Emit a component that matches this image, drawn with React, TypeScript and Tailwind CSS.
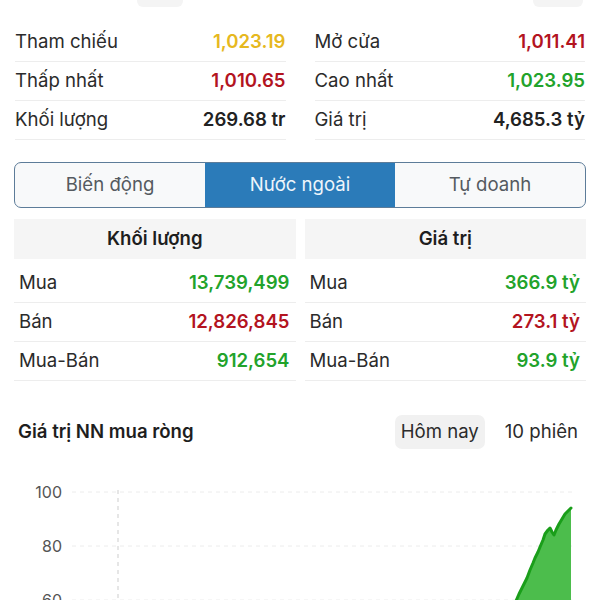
import React from "react";

const font = { fontFamily: "Inter, 'Liberation Sans', sans-serif" };

function StatRow({ label, value, color }: { label: string; value: string; color: string }) {
  return (
    <div className="flex h-[39px] items-center justify-between border-b border-[#ededed]">
      <span className="text-[18.6px] text-[#2b2b2b]">{label}</span>
      <span className={`text-[18.6px] font-semibold ${color}`}>{value}</span>
    </div>
  );
}

function TRow({ label, value, color }: { label: string; value: string; color: string }) {
  return (
    <div className="flex h-[39px] items-center justify-between border-b border-[#ededed] pl-[5px] pr-[6px]">
      <span className="text-[18.6px] text-[#2b2b2b]">{label}</span>
      <span className={`text-[18.6px] font-semibold ${color}`}>{value}</span>
    </div>
  );
}

export default function App() {
  const green = "text-[#22a32b]";
  const red = "text-[#b3141f]";
  const yellow = "text-[#e6b820]";
  const dark = "text-[#222222]";

  const yOf = (v: number) => 22 - (v - 100) * 2.7;
  const pts: [number, number][] = [
    [516, 131], [519, 124], [522, 118], [524, 114], [527, 108], [530, 100], [533, 93], [535, 88],
    [538, 82], [540, 77], [543, 70], [545, 64], [548, 60], [550, 58], [552, 62], [554, 65],
    [556, 60], [559, 54], [562, 49], [565, 44], [568, 41], [571, 38],
  ];
  const line = pts.map((p, i) => `${i ? "L" : "M"}${p[0]} ${p[1]}`).join(" ");
  const area = `${line} L571 131 L516 131 Z`;

  return (
    <div className="h-[600px] w-[600px] overflow-hidden bg-white" style={font}>
      <div className="relative h-[23px]">
        <div className="absolute left-[137px] top-0 h-[7px] w-[46px] rounded-b-md bg-[#f4f4f4]" />
        <div className="absolute left-[533px] top-0 h-[7px] w-[50px] rounded-b-md bg-[#f4f4f4]" />
      </div>

      <div className="grid grid-cols-2 gap-x-[29px] px-[15px]">
        <div>
          <StatRow label="Tham chiếu" value="1,023.19" color={yellow} />
          <StatRow label="Thấp nhất" value="1,010.65" color={red} />
          <StatRow label="Khối lượng" value="269.68 tr" color={dark} />
        </div>
        <div>
          <StatRow label="Mở cửa" value="1,011.41" color={red} />
          <StatRow label="Cao nhất" value="1,023.95" color={green} />
          <StatRow label="Giá trị" value="4,685.3 tỷ" color={dark} />
        </div>
      </div>

      <div className="mx-[14px] mt-[22px] flex h-[46px] overflow-hidden rounded-[7px] border border-[#5d7c99] bg-[#f8f9fa]">
        <div className="flex flex-1 items-center justify-center text-[18.6px] text-[#555a60]">Biến động</div>
        <div className="flex w-[190px] items-center justify-center bg-[#2b7bb9] text-[18.6px] text-[#eef5fb]">Nước ngoài</div>
        <div className="flex flex-1 items-center justify-center text-[18.6px] text-[#555a60]">Tự doanh</div>
      </div>

      <div className="mt-[11px] grid grid-cols-2 gap-x-[9px] px-[14px]">
        <div>
          <div className="mb-[5px] flex h-[40px] items-center justify-center bg-[#f5f5f5] text-[18.6px] font-semibold text-[#1e1e1e]">Khối lượng</div>
          <TRow label="Mua" value="13,739,499" color={green} />
          <TRow label="Bán" value="12,826,845" color={red} />
          <TRow label="Mua-Bán" value="912,654" color={green} />
        </div>
        <div>
          <div className="mb-[5px] flex h-[40px] items-center justify-center bg-[#f5f5f5] text-[18.6px] font-semibold text-[#1e1e1e]">Giá trị</div>
          <TRow label="Mua" value="366.9 tỷ" color={green} />
          <TRow label="Bán" value="273.1 tỷ" color={red} />
          <TRow label="Mua-Bán" value="93.9 tỷ" color={green} />
        </div>
      </div>

      <div className="mt-[34px] flex items-center justify-between pl-[18px] pr-[22px]">
        <span className="text-[18.6px] font-semibold text-[#1e1e1e]">Giá trị NN mua ròng</span>
        <div className="flex items-center gap-[20px]">
          <div className="flex h-[34px] items-center rounded-[7px] bg-[#f1f1f1] px-[6px] text-[18.6px] text-[#2b2b2b]">Hôm nay</div>
          <span className="text-[18.6px] text-[#2b2b2b]">10 phiên</span>
        </div>
      </div>

      <svg width="600" height="133" className="mt-[21px] block">
        {[100, 80, 60].map((v) => (
          <g key={v}>
            <line x1="72" x2="576" y1={yOf(v)} y2={yOf(v)} stroke="#ececec" strokeWidth="1" strokeDasharray="4 4" />
            <text x="62" y={yOf(v) + 6} textAnchor="end" fontSize="16" fill="#555555" fontFamily="Inter, 'Liberation Sans', sans-serif">{v}</text>
          </g>
        ))}
        <line x1="118" x2="118" y1="20" y2="133" stroke="#d6d6d6" strokeWidth="1.2" strokeDasharray="4 4" />
        <path d={area} fill="#4cbd4c" />
        <path d={line} fill="none" stroke="#1a9e1a" strokeWidth="3" strokeLinejoin="round" strokeLinecap="round" />
      </svg>
    </div>
  );
}
